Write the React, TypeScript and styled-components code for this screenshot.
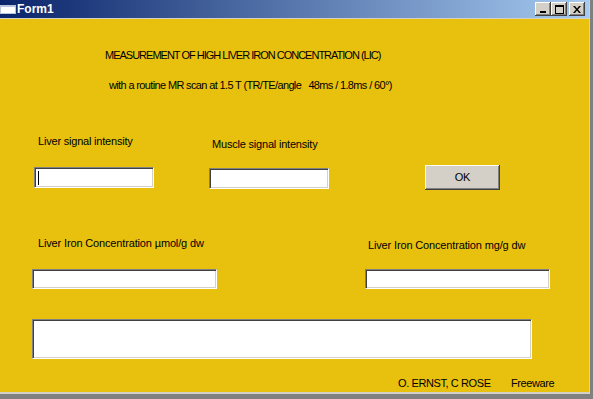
import React from "react";
import styled, { createGlobalStyle } from "styled-components";

const GlobalStyle = createGlobalStyle`
  html, body {
    margin: 0;
    padding: 0;
    background: #808080;
  }
  body {
    font-family: "Liberation Sans", Arial, sans-serif;
    font-size: 11px;
  }
`;

const Window = styled.div`
  width: 593px;
  height: 399px;
  box-sizing: border-box;
  background: #808080;
  padding: 0 3px 5px 0;
  display: flex;
`;

const Frame = styled.div`
  flex: 1;
  display: flex;
  flex-direction: column;
  border-right: 1px solid #d4d0c8;
  border-bottom: 2px solid #d4d0c8;
`;

const TitleBar = styled.div`
  height: 18px;
  flex: none;
  display: flex;
  align-items: center;
  background: linear-gradient(to right, #0a246a, #a6caf0);
  border-bottom: 1px solid #d4d0c8;
  padding-right: 4px;
`;

const AppIcon = styled.div`
  width: 16px;
  height: 9px;
  box-sizing: border-box;
  background: #fff;
  border: 1px solid #b8c4dc;
  border-top-width: 2px;
  margin-top: 1px;
`;

const Caption = styled.span`
  color: #fff;
  font-weight: bold;
  font-size: 12px;
  margin-left: 1px;
  flex: 1;
`;

const CaptionButton = styled.div<{ $gap?: number }>`
  width: 16px;
  height: 14px;
  margin-left: ${(p) => p.$gap ?? 0}px;
  background: #d4d0c8;
  box-shadow: inset -1px -1px #404040, inset 1px 1px #fff,
    inset -2px -2px #808080, inset 2px 2px #d4d0c8;
  display: flex;
  align-items: center;
  justify-content: center;
`;

const Client = styled.div`
  flex: 1;
  background: #e8c00e;
  display: flex;
  flex-direction: column;
  padding-left: 32px;
  color: #000;
`;

const Line = styled.div<{ $top: number; $left: number; $ls?: number }>`
  margin-top: ${(p) => p.$top}px;
  margin-left: ${(p) => p.$left}px;
  height: 13px;
  line-height: 13px;
  white-space: pre;
  letter-spacing: ${(p) => p.$ls ?? 0}px;
`;

const Row = styled.div<{ $top: number }>`
  display: flex;
  align-items: flex-start;
  margin-top: ${(p) => p.$top}px;
`;

const Cell = styled.div<{ $width?: number; $left?: number; $top?: number; $offset?: number; $ls?: number }>`
  flex: none;
  width: ${(p) => (p.$width ? `${p.$width}px` : "auto")};
  padding-left: ${(p) => p.$left ?? 0}px;
  margin-left: ${(p) => p.$offset ?? 0}px;
  margin-top: ${(p) => p.$top ?? 0}px;
  box-sizing: border-box;
  line-height: 13px;
  white-space: pre;
  letter-spacing: ${(p) => p.$ls ?? -0.2}px;
`;

const TextField = styled.div<{ $width: number; $height: number }>`
  width: ${(p) => p.$width}px;
  height: ${(p) => p.$height}px;
  box-sizing: border-box;
  background: #fff;
  border-top: 1px solid #808080;
  border-left: 1px solid #808080;
  border-bottom: 1px solid #fff;
  border-right: 1px solid #fff;
  box-shadow: inset 1px 1px #404040, inset -1px -1px #d4d0c8;
  display: flex;
  align-items: center;
  padding-left: 3px;
`;

const Caret = styled.div`
  width: 1px;
  height: 14px;
  background: #000;
`;

const PushButton = styled.div`
  width: 75px;
  height: 25px;
  box-sizing: border-box;
  background: #d4d0c8;
  box-shadow: inset -1px -1px #404040, inset 1px 1px #fff,
    inset -2px -2px #808080, inset 2px 2px #d4d0c8;
  display: flex;
  align-items: center;
  justify-content: center;
  font-size: 11px;
`;

const MinGlyph = () => (
  <svg width="8" height="8" viewBox="0 0 8 8">
    <rect x="1" y="6" width="6" height="2" fill="#000" />
  </svg>
);

const MaxGlyph = () => (
  <svg width="9" height="9" viewBox="0 0 9 9">
    <rect x="0.5" y="1" width="8" height="7.5" fill="none" stroke="#000" />
    <rect x="0" y="0" width="9" height="2" fill="#000" />
  </svg>
);

const CloseGlyph = () => (
  <svg width="8" height="7" viewBox="0 0 8 7">
    <path d="M0 0 L2 0 L4 2.5 L6 0 L8 0 L5 3.5 L8 7 L6 7 L4 4.5 L2 7 L0 7 L3 3.5 Z" fill="#000" />
  </svg>
);

export default function App() {
  return (
    <>
      <GlobalStyle />
      <Window>
        <Frame>
          <TitleBar>
            <AppIcon />
            <Caption>Form1</Caption>
            <CaptionButton>
              <MinGlyph />
            </CaptionButton>
            <CaptionButton>
              <MaxGlyph />
            </CaptionButton>
            <CaptionButton $gap={2}>
              <CloseGlyph />
            </CaptionButton>
          </TitleBar>
          <Client>
            <Line $top={30} $left={73} $ls={-1}>
              MEASUREMENT OF HIGH LIVER IRON CONCENTRATION (LIC)
            </Line>
            <Line $top={17} $left={77} $ls={-0.64}>
              {"with a routine MR scan at 1.5 T (TR/TE/angle   48ms / 1.8ms / 60°)"}
            </Line>
            <Row $top={43}>
              <Cell $width={177} $left={6}>Liver signal intensity</Cell>
              <Cell $left={3} $top={3}>Muscle signal intensity</Cell>
            </Row>
            <Row $top={14}>
              <Cell $width={177} $left={2} $top={2}>
                <TextField $width={120} $height={21}>
                  <Caret />
                </TextField>
              </Cell>
              <Cell $width={216} $top={3}>
                <TextField $width={120} $height={21} />
              </Cell>
              <Cell>
                <PushButton>OK</PushButton>
              </Cell>
            </Row>
            <Row $top={47}>
              <Cell $width={333} $left={6} $ls={-0.15}>Liver Iron Concentration µmol/g dw</Cell>
              <Cell $left={3} $top={2} $ls={-0.15}>Liver Iron Concentration mg/g dw</Cell>
            </Row>
            <Row $top={17}>
              <Cell $width={333}>
                <TextField $width={185} $height={20} />
              </Cell>
              <Cell>
                <TextField $width={185} $height={20} />
              </Cell>
            </Row>
            <Row $top={30}>
              <TextField $width={500} $height={40} />
            </Row>
            <Row $top={18}>
              <Cell $width={113} $offset={366} $ls={-0.4}>O. ERNST, C ROSE</Cell>
              <Cell $ls={-0.4}>Freeware</Cell>
            </Row>
          </Client>
        </Frame>
      </Window>
    </>
  );
}
